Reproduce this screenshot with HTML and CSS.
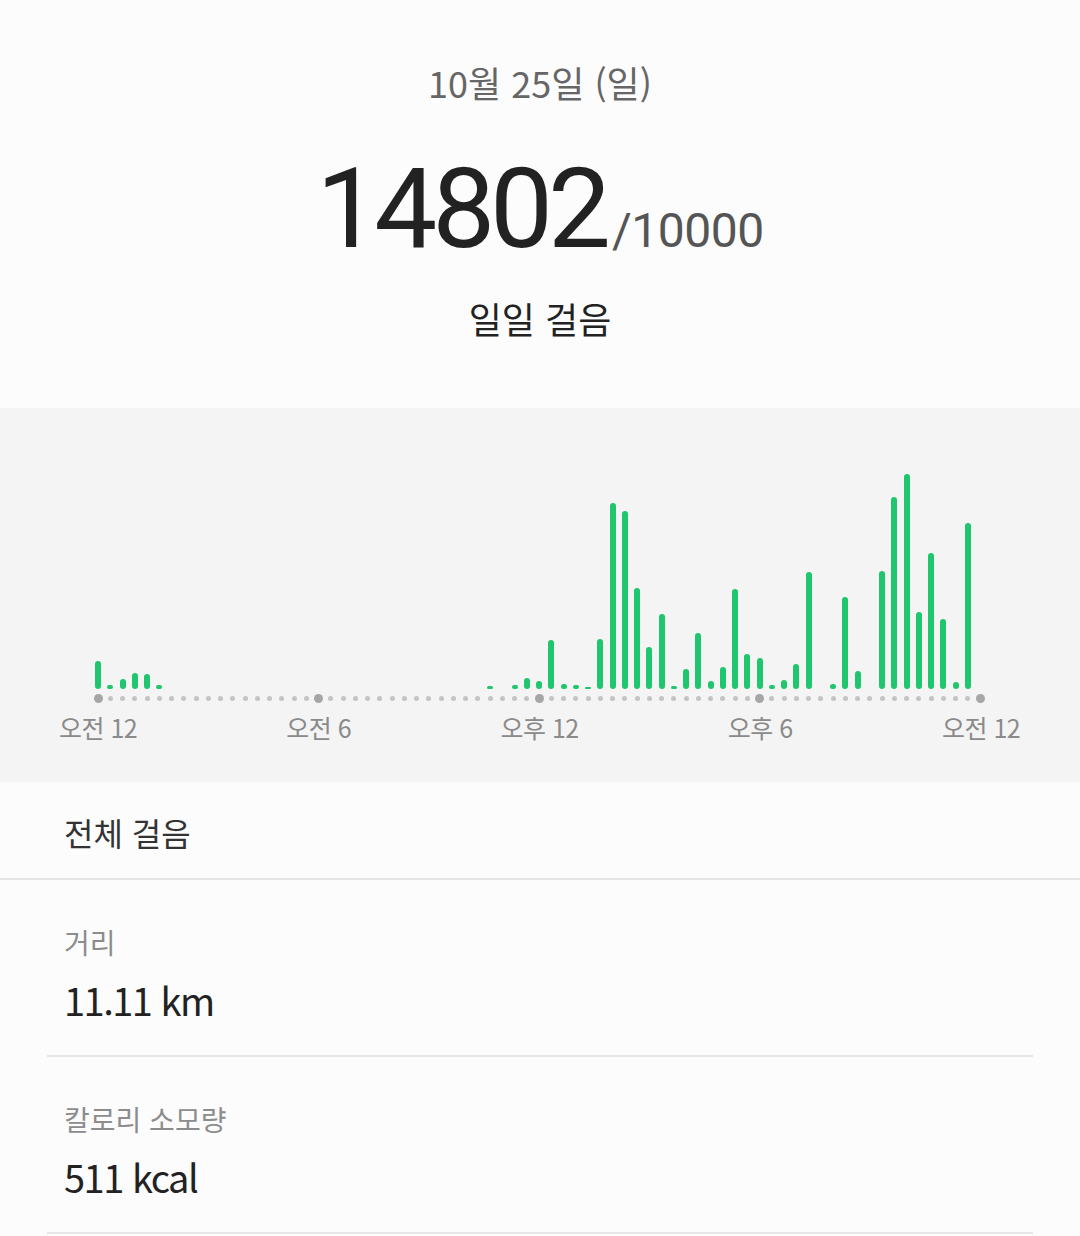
FILE: index.html
```html
<!DOCTYPE html>
<html lang="ko">
<head>
<meta charset="utf-8">
<title>일일 걸음</title>
<link rel="stylesheet" href="styles.css">
</head>
<body>
<header class="summary">
  <div class="date">10월 25일 (일)</div>
  <div class="count"><span class="steps">14802</span><span class="goal">/10000</span></div>
  <div class="caption">일일 걸음</div>
</header>

<section class="chart">
  <div class="bars">
    <i style="height:28px"></i><i style="height:4px"></i><i style="height:10px"></i><i style="height:16px"></i><i style="height:15px"></i><i style="height:4px"></i>
    <i></i><i></i><i></i><i></i><i></i><i></i><i></i><i></i><i></i><i></i><i></i><i></i><i></i>
    <i></i><i></i><i></i><i></i><i></i><i></i><i></i><i></i><i></i><i></i><i></i><i></i><i></i>
    <i style="height:3px"></i><i></i><i style="height:4px"></i><i style="height:11px"></i><i style="height:8px"></i><i style="height:49px"></i><i style="height:5px"></i><i style="height:4px"></i><i style="height:2px"></i><i style="height:50px"></i><i style="height:186px"></i><i style="height:178px"></i><i style="height:101px"></i><i style="height:42px"></i><i style="height:75px"></i><i style="height:3px"></i>
    <i style="height:20px"></i><i style="height:56px"></i><i style="height:8px"></i><i style="height:22px"></i><i style="height:100px"></i><i style="height:35px"></i><i style="height:31px"></i><i style="height:4px"></i><i style="height:9px"></i><i style="height:25px"></i><i style="height:117px"></i><i></i><i style="height:5px"></i><i style="height:92px"></i><i style="height:18px"></i><i></i>
    <i style="height:118px"></i><i style="height:192px"></i><i style="height:215px"></i><i style="height:77px"></i><i style="height:136px"></i><i style="height:70px"></i><i style="height:7px"></i><i style="height:166px"></i><i></i>
  </div>
  <div class="dots">
    <i class="big"></i><i></i><i></i><i></i><i></i><i></i><i></i><i></i><i></i><i></i><i></i><i></i><i></i><i></i><i></i><i></i><i></i><i></i>
    <i class="big"></i><i></i><i></i><i></i><i></i><i></i><i></i><i></i><i></i><i></i><i></i><i></i><i></i><i></i><i></i><i></i><i></i><i></i>
    <i class="big"></i><i></i><i></i><i></i><i></i><i></i><i></i><i></i><i></i><i></i><i></i><i></i><i></i><i></i><i></i><i></i><i></i><i></i>
    <i class="big"></i><i></i><i></i><i></i><i></i><i></i><i></i><i></i><i></i><i></i><i></i><i></i><i></i><i></i><i></i><i></i><i></i><i></i>
    <i class="big"></i>
  </div>
  <div class="labels">
    <span>오전 12</span><span>오전 6</span><span>오후 12</span><span>오후 6</span><span>오전 12</span>
  </div>
</section>

<section class="details">
  <div class="total">전체 걸음</div>
  <div class="item">
    <div class="label">거리</div>
    <div class="value">11.11 km</div>
  </div>
  <div class="item">
    <div class="label">칼로리 소모량</div>
    <div class="value">511 kcal</div>
  </div>
</section>
</body>
</html>
```

FILE: styles.css
```css
* { box-sizing: border-box; }
html, body { margin: 0; padding: 0; }
body {
  width: 1080px;
  height: 1236px;
  overflow: hidden;
  background: #fcfcfc;
  font-family: "Noto Sans CJK KR", "Noto Sans", sans-serif;
  color: #222;
}

.summary {
  height: 408px;
  padding-top: 60px;
  display: flex;
  flex-direction: column;
  align-items: center;
}
.date {
  font-size: 36px;
  line-height: 44px;
  color: #666;
}
.count {
  margin-top: 50px;
  display: flex;
  align-items: baseline;
  line-height: 110px;
  height: 110px;
}
.steps {
  font-family: Roboto, "Noto Sans", sans-serif;
  font-size: 112px;
  letter-spacing: -5px;
  color: #222;
}
.goal {
  font-family: Roboto, "Noto Sans", sans-serif;
  font-size: 48px;
  color: #555;
  margin-left: 6px;
  letter-spacing: -0.5px;
}
.caption {
  margin-top: 32px;
  font-size: 36px;
  line-height: 44px;
  color: #222;
}

.chart {
  height: 374px;
  background: #f4f4f4;
  padding: 52px 0 0 93px;
}
.bars, .dots, .labels {
  width: 893px;
  display: flex;
  justify-content: space-between;
}
.bars {
  height: 229px;
  align-items: flex-end;
}
.bars i {
  width: 6px;
  margin: 0 2px;
  border-radius: 3px;
  background: #1fc66d;
}
.dots {
  margin-top: 5px;
  height: 9px;
  align-items: center;
}
.dots i {
  width: 5px;
  height: 5px;
  margin: 0 2.5px;
  border-radius: 50%;
  background: #c4c4c4;
}
.dots i.big {
  width: 9px;
  height: 9px;
  margin: 0 0.5px;
  background: #a6a6a6;
}
.labels {
  margin-top: 9px;
}
.labels span {
  width: 10px;
  display: flex;
  justify-content: center;
  white-space: nowrap;
  font-size: 25px;
  line-height: 30px;
  color: #8a8a8a;
  letter-spacing: -0.5px;
}

.total {
  height: 98px;
  padding: 28px 0 0 64px;
  font-size: 32px;
  line-height: 44px;
  color: #333;
  border-bottom: 2px solid #e4e4e4;
}
.item {
  margin: 0 47px;
  height: 177px;
  padding: 44px 0 0 17px;
  border-bottom: 2px solid #e6e6e6;
}
.label {
  font-size: 28px;
  line-height: 36px;
  color: #8c8c8c;
}
.value {
  margin-top: 18px;
  font-size: 38px;
  line-height: 44px;
  color: #222;
  letter-spacing: -1.5px;
}
```
